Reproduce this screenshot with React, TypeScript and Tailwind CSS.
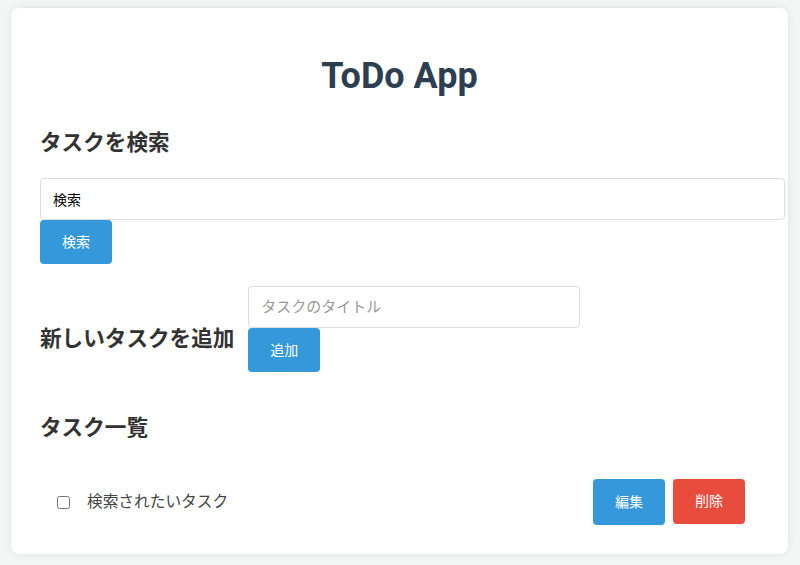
import React, { useState } from 'react';

const font = { fontFamily: 'Roboto, "Noto Sans CJK JP", sans-serif' };

const App: React.FC = (): JSX.Element => {
  const [query, setQuery] = useState<string>('検索');
  const [title, setTitle] = useState<string>('');
  const [done, setDone] = useState<boolean>(false);

  return (
    <div className="w-[800px] h-[565px] bg-[#f4f5f5] pt-[8px] pl-[11px]" style={font}>
      <div className="w-[777px] h-[546px] bg-white rounded-lg shadow-[0_0_8px_rgba(0,0,0,0.08)] px-[29px] pt-[46px]">
        <h1 className="text-center text-[36px] leading-[44px] font-bold text-[#2c3e50]">ToDo App</h1>

        <h2 className="mt-[30px] text-[21.6px] leading-[30px] font-bold text-[#333]">タスクを検索</h2>
        <form className="mt-[20px]" onSubmit={(e) => e.preventDefault()}>
          <input
            type="text"
            value={query}
            onChange={(e) => setQuery(e.target.value)}
            className="block w-[745px] h-[42px] px-[12px] text-[14px] text-black border border-[#ddd] rounded-[4px] outline-none"
          />
          <button className="block w-[72px] h-[44px] bg-[#3498db] text-white text-[14px] rounded-[4px]">検索</button>
        </form>

        <div className="flex items-end gap-[14px] mt-[22px]">
          <h2 className="mb-[18px] text-[21.6px] leading-[30px] font-bold text-[#333]">新しいタスクを追加</h2>
          <form onSubmit={(e) => e.preventDefault()}>
            <input
              type="text"
              value={title}
              placeholder="タスクのタイトル"
              onChange={(e) => setTitle(e.target.value)}
              className="block w-[332px] h-[42px] px-[12px] text-[15px] border border-[#ddd] rounded-[4px] outline-none placeholder:text-[#999]"
            />
            <button className="block w-[72px] h-[44px] bg-[#3498db] text-white text-[14px] rounded-[4px]">追加</button>
          </form>
        </div>

        <h2 className="mt-[41px] text-[21.6px] leading-[30px] font-bold text-[#333]">タスク一覧</h2>

        <ul className="mt-[36px]">
          <li className="flex items-center pl-[17px] pr-[14px]">
            <input
              type="checkbox"
              checked={done}
              onChange={(e) => setDone(e.target.checked)}
              className="w-[13px] h-[13px] m-0"
            />
            <span className="ml-[17px] text-[15.7px] text-[#444]">検索されたいタスク</span>
            <div className="ml-auto flex gap-[8px]">
              <button className="w-[72px] h-[46px] bg-[#3498db] text-white text-[14px] rounded-[4px]">編集</button>
              <button className="w-[72px] h-[45px] bg-[#e74c3c] text-white text-[14px] rounded-[4px]">削除</button>
            </div>
          </li>
        </ul>
      </div>
    </div>
  );
};

export default App;
